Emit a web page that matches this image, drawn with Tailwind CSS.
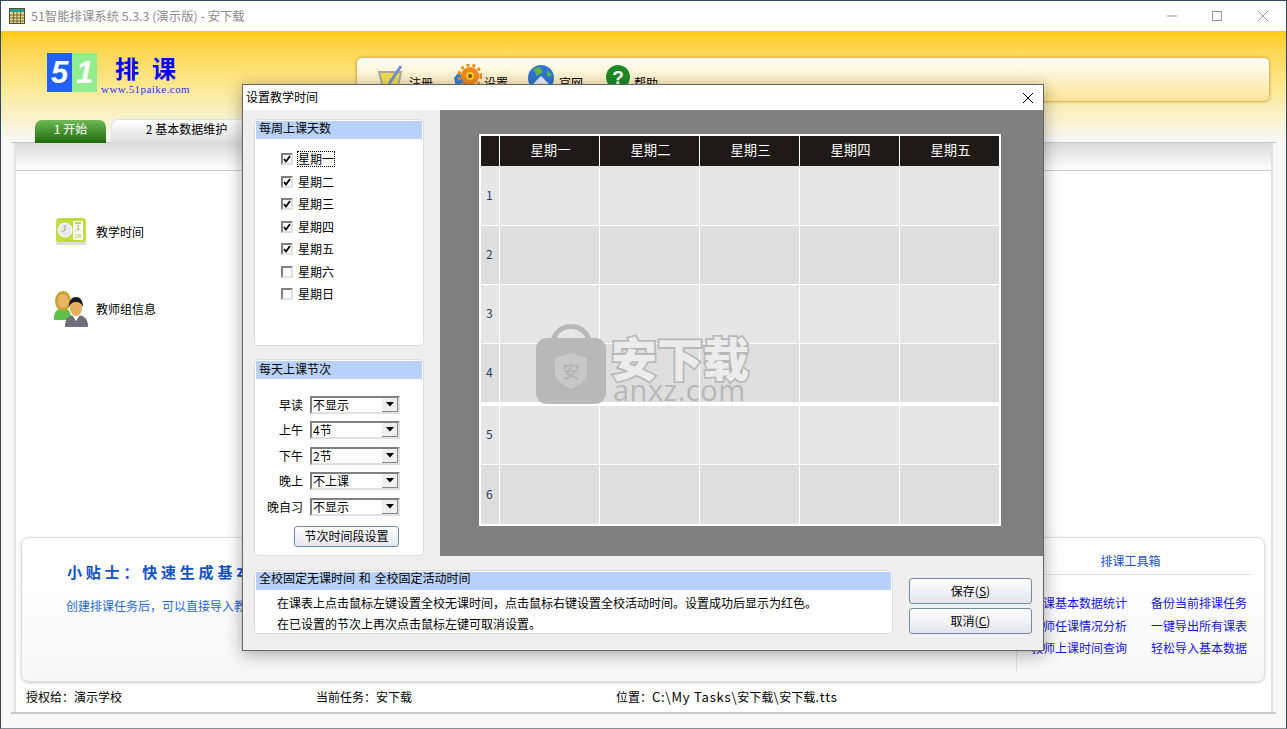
<!DOCTYPE html>
<html lang="zh-CN">
<head>
<meta charset="utf-8">
<title>51智能排课系统</title>
<script src="https://cdn.jsdelivr.net/npm/@tailwindcss/browser@4"></script>
</head>
<body class="m-0 bg-white">
<div class="relative w-[1287px] h-[729px] overflow-hidden flex flex-col border border-[#2c4a63] border-b-[#8a8f94] bg-[#f8f8f8] text-[12px] leading-[16px] text-black font-['Noto_Sans_CJK_SC',sans-serif]">

  <!-- title bar -->
  <div class="h-[30px] shrink-0 bg-white flex items-center pl-[8px]">
    <svg width="16" height="16" viewBox="0 0 16 16" class="mr-[6px]"><rect x="0.5" y="0.5" width="15" height="15" fill="#e8dc8c" stroke="#55502a"/><rect x="1" y="1" width="14" height="3" fill="#1f9c9c"/><path d="M1 7h14M1 10h14M1 13h14M4.500 4v11M8 4v11M11.500 4v11" stroke="#6b6636" stroke-width="1"/></svg>
    <span class="text-[#8c8c8c] text-[12.400px]">51智能排课系统 5.3.3 (演示版) - 安下载</span>
    <div class="ml-auto flex items-center h-full">
      <svg width="46" height="30" viewBox="0 0 46 30"><path d="M21 15h10" stroke="#999" stroke-width="1"/></svg>
      <svg width="46" height="30" viewBox="0 0 46 30"><rect x="20.500" y="10.500" width="9" height="9" fill="none" stroke="#999"/></svg>
      <svg width="46" height="30" viewBox="0 0 46 30" class="mr-[2px]"><path d="M20 10l10 10M30 10l-10 10" stroke="#999" stroke-width="1"/></svg>
    </div>
  </div>

  <!-- header -->
  <div class="h-[111px] shrink-0 bg-gradient-to-b from-[#ffcc0a] via-[#fde98f] to-[#f8f8f8] relative flex">
    <div class="ml-[46px] mt-[22px] w-[150px] flex items-start">
      <div class="w-[25px] h-[39px] bg-[#2060ff] text-white italic font-bold text-[31px] leading-[39px] text-center font-['Liberation_Sans',sans-serif]">5</div>
      <div class="w-[25px] h-[39px] bg-[#90ee90] text-white italic font-bold text-[31px] leading-[39px] text-center font-['Liberation_Sans',sans-serif]">1</div>
      <div class="ml-[4px] flex flex-col">
        <div class="pl-[14px] text-[#0000ff] font-bold text-[24px] leading-[30px] tracking-[13px] font-['Noto_Sans_CJK_SC',serif] whitespace-nowrap">排课</div>
        <div class="text-[#3030ff] text-[11px] leading-[12px] whitespace-nowrap font-['Liberation_Serif',serif] tracking-[0.450px]">www.51paike.com</div>
      </div>
    </div>
    <div class="ml-[159px] mt-[26px] w-[914px] h-[45px] rounded-[6px] border border-[#d9bf63] bg-gradient-to-b from-[#fffefa] to-[#fde495] shadow-[0_0_3px_#d6ae33] flex items-start pl-[20px] pt-[6px]">
      <div class="flex items-start w-[75px]">
        <svg width="28" height="30" viewBox="0 0 28 30"><path d="M2 8h22l-4 20H7z" fill="#f2de4e" stroke="#a9a9a9" stroke-width="2"/><path d="M12 20L24 2" stroke="#7a8fd0" stroke-width="3"/></svg>
        <span class="ml-[4px] mt-[11px]">注册</span>
      </div>
      <div class="flex items-start w-[75px]">
        <svg width="30" height="30" viewBox="0 0 30 30"><path d="M2 14l4-5 3 2 4-4 4 20H5z" fill="#2f7fd8"/><circle cx="18" cy="12" r="9" fill="#f08a1c"/><circle cx="18" cy="12" r="11" fill="none" stroke="#f08a1c" stroke-width="3" stroke-dasharray="3 3"/><circle cx="18" cy="12" r="4" fill="#f7d331"/><circle cx="18" cy="12" r="2" fill="#8a4a10"/></svg>
        <span class="ml-[2px] mt-[11px]">设置</span>
      </div>
      <div class="flex items-start w-[78px]">
        <svg width="28" height="30" viewBox="0 0 28 30"><circle cx="14" cy="14" r="13" fill="#2f75cf"/><path d="M6 5l7-2 3 5-6 4zM20 6l5 5-5 2z" fill="#62b54a"/><path d="M5 21L14 12l9 9v6H5z" fill="#e8eef8"/></svg>
        <span class="ml-[4px] mt-[11px]">官网</span>
      </div>
      <div class="flex items-start">
        <svg width="26" height="30" viewBox="0 0 26 30"><circle cx="13" cy="13" r="12" fill="#1d8a25"/><text x="13" y="20" text-anchor="middle" font-size="19" font-weight="700" fill="#fff" font-family="Liberation Sans">?</text></svg>
        <span class="ml-[3px] mt-[11px]">帮助</span>
      </div>
    </div>
    <!-- tabs -->
    <div class="absolute left-[34px] top-[88px] flex items-end gap-[5px]">
      <div class="w-[71px] h-[23px] rounded-t-[7px] bg-gradient-to-b from-[#6dbb52] to-[#1c6b0b] text-white text-center leading-[17px]">1 开始</div>
      <div class="w-[151px] h-[24px] rounded-t-[7px] border border-b-0 border-[#e2e2e2] bg-gradient-to-b from-white to-[#dedede] text-center leading-[18px]">2 基本数据维护</div>
    </div>
  </div>

  <!-- main panel -->
  <div class="ml-[10px] mr-[10px] h-[572px] shrink-0 border-t border-b-2 border-[#c8c8c8] flex">
    <div class="ml-[3px] mr-[3px] flex-1 border-l-2 border-r-2 border-[#e2e2e2] bg-white flex flex-col">
      <div class="h-[28px] shrink-0 bg-gradient-to-b from-[#dcdcdc] to-white border-b border-[#cccccc]"></div>

      <div class="h-[366px] shrink-0 pl-[39px] pt-[46px] flex flex-col gap-[43px]">
        <div class="flex items-center h-[30px]">
          <svg width="32" height="30" viewBox="0 0 32 30"><rect x="1" y="1" width="30" height="25" rx="4" fill="#bfdd3c"/><rect x="1" y="25" width="30" height="3" fill="#ddd"/><circle cx="10" cy="13" r="7" fill="#e8e8e8" stroke="#fff"/><path d="M10 13V8M10 13l-3 2" stroke="#999"/><rect x="18" y="4" width="10" height="19" fill="#fff"/><path d="M20 6h6" stroke="#a5c52e" stroke-width="1.500"/><path d="M18 14h10" stroke="#ddd"/><text x="23" y="13" text-anchor="middle" font-size="7" fill="#8aa822" font-family="Liberation Sans">1</text><text x="23" y="21" text-anchor="middle" font-size="6" fill="#a5c52e" font-family="Liberation Sans">28</text></svg>
          <span class="ml-[9px]">教学时间</span>
        </div>
        <div class="flex items-center h-[38px] -ml-[2px]">
          <svg width="36" height="38" viewBox="0 0 36 38"><path d="M1 27c0-6 5-9 9-9s8 3 8 9v3H1z" fill="#5cc04a"/><ellipse cx="10" cy="11" rx="8" ry="10" fill="#c8a22f"/><ellipse cx="10" cy="11" rx="5.500" ry="7" fill="#e9b566"/><path d="M12 36c0-9 5-11 11-11s12 2 12 11v1H12z" fill="#6e6e7c"/><path d="M19 25l4 6 4-6z" fill="#fff"/><ellipse cx="23" cy="18" rx="6" ry="8" fill="#e6ad5c"/><path d="M16 17c0-7 3-10 7-10s7 3 7 10c-2-4-4-5-7-5s-5 1-7 5z" fill="#1a1a1a"/></svg>
          <span class="ml-[7px]">教师组信息</span>
        </div>
      </div>

      <!-- tips card -->
      <div class="ml-[5px] mr-[6px] h-[145px] shrink-0 rounded-[8px] border border-[#dedede] shadow-[0_1px_3px_#cccccc] bg-gradient-to-b from-white to-[#f7f7f7] flex">
        <div class="w-[994px] shrink-0 pl-[45px] pt-[24px]">
          <div class="font-bold text-[15px] leading-[20px] tracking-[3.800px] text-[#1050c8] whitespace-nowrap">小贴士：快速生成基本数据</div>
          <div class="mt-[16px] -ml-[1px] text-[#2a6ad0] whitespace-nowrap">创建排课任务后，可以直接导入教师和课程数据</div>
        </div>
        <div class="flex-1 relative">
          <div class="h-[37px] mr-[13px] pr-[6px] border-b border-[#e2e2e2] text-center leading-[46px] text-[#2255cc] whitespace-nowrap">排课工具箱</div>
          <div class="absolute left-0 top-[51px] h-[84px] w-px bg-[#e0e0e0]"></div>
          <div class="pt-[20px] pl-[15px] grid grid-cols-[96px_96px] gap-x-[24px] gap-y-[6.600px] text-[#1414e6] text-right whitespace-nowrap">
            <span>排课基本数据统计</span><span>备份当前排课任务</span>
            <span>教师任课情况分析</span><span>一键导出所有课表</span>
            <span>教师上课时间查询</span><span>轻松导入基本数据</span>
          </div>
        </div>
      </div>

      <!-- status -->
      <div class="pl-[10px] mt-[7px] flex whitespace-nowrap">
        <span class="w-[290px]">授权给：演示学校</span>
        <span class="w-[300px]">当前任务：安下载</span>
        <span>位置：<span class="text-[13px] tracking-[0.800px]">C:\My Tasks\</span>安下载<span class="text-[13px] tracking-[0.800px]">\</span>安下载<span class="text-[13px] tracking-[0.800px]">.tts</span></span>
      </div>
    </div>
  </div>

  <!-- dialog window -->
  <div class="absolute left-[241px] top-[83px] w-[802px] h-[567px] border border-[#666666] bg-[#efefef] shadow-[0_3px_16px_rgba(0,0,0,0.35)] flex flex-col">
    <div class="h-[25px] shrink-0 bg-white flex items-center pl-[3px] justify-between">
      <span class="-mt-[2px]">设置教学时间</span>
      <svg width="12" height="12" viewBox="0 0 12 12" class="mr-[9px]"><path d="M1 1l10 10M11 1L1 11" stroke="#000" stroke-width="1"/></svg>
    </div>
    <div class="flex h-[446px] shrink-0">
      <div class="w-[197px] shrink-0 pl-[11px] pt-[9px] flex flex-col">
        <div class="w-[170px] h-[228px] rounded-[4px] border border-[#dddddd] bg-white p-px">
          <div class="h-[18px] bg-[#b9d2fb] pl-[3px] leading-[13px]">每周上课天数</div>
          <div class="pl-[25px] pt-[12px] flex flex-col gap-[6.500px]">
            <label class="flex items-center h-[16px]"><span class="w-[12px] h-[12px] border-2 border-[#808080] border-r-[#e0e0e0] border-b-[#e0e0e0] bg-white flex items-center justify-center"><svg width="8" height="8" viewBox="0 0 8 8"><path d="M1 4l2 2.500L7 1" fill="none" stroke="#000" stroke-width="1.800"/></svg></span><span class="ml-[5px] outline-1 outline-dotted outline-black px-0 leading-[14px]">星期一</span></label>
            <label class="flex items-center h-[16px]"><span class="w-[12px] h-[12px] border-2 border-[#808080] border-r-[#e0e0e0] border-b-[#e0e0e0] bg-white flex items-center justify-center"><svg width="8" height="8" viewBox="0 0 8 8"><path d="M1 4l2 2.500L7 1" fill="none" stroke="#000" stroke-width="1.800"/></svg></span><span class="ml-[5px]">星期二</span></label>
            <label class="flex items-center h-[16px]"><span class="w-[12px] h-[12px] border-2 border-[#808080] border-r-[#e0e0e0] border-b-[#e0e0e0] bg-white flex items-center justify-center"><svg width="8" height="8" viewBox="0 0 8 8"><path d="M1 4l2 2.500L7 1" fill="none" stroke="#000" stroke-width="1.800"/></svg></span><span class="ml-[5px]">星期三</span></label>
            <label class="flex items-center h-[16px]"><span class="w-[12px] h-[12px] border-2 border-[#808080] border-r-[#e0e0e0] border-b-[#e0e0e0] bg-white flex items-center justify-center"><svg width="8" height="8" viewBox="0 0 8 8"><path d="M1 4l2 2.500L7 1" fill="none" stroke="#000" stroke-width="1.800"/></svg></span><span class="ml-[5px]">星期四</span></label>
            <label class="flex items-center h-[16px]"><span class="w-[12px] h-[12px] border-2 border-[#808080] border-r-[#e0e0e0] border-b-[#e0e0e0] bg-white flex items-center justify-center"><svg width="8" height="8" viewBox="0 0 8 8"><path d="M1 4l2 2.500L7 1" fill="none" stroke="#000" stroke-width="1.800"/></svg></span><span class="ml-[5px]">星期五</span></label>
            <label class="flex items-center h-[16px]"><span class="w-[12px] h-[12px] border-2 border-[#808080] border-r-[#e0e0e0] border-b-[#e0e0e0] bg-white"></span><span class="ml-[5px]">星期六</span></label>
            <label class="flex items-center h-[16px]"><span class="w-[12px] h-[12px] border-2 border-[#808080] border-r-[#e0e0e0] border-b-[#e0e0e0] bg-white"></span><span class="ml-[5px]">星期日</span></label>
          </div>
        </div>
        <div class="mt-[13px] w-[170px] h-[198px] rounded-[4px] border border-[#dddddd] bg-white p-px">
          <div class="h-[18px] bg-[#b9d2fb] pl-[3px] leading-[15px]">每天上课节次</div>
          <div class="pt-[17px] flex flex-col gap-[7.500px]">
            <div class="flex items-center h-[18px]"><span class="w-[47px] text-right">早读</span><span class="ml-[7px] w-[90px] h-[18px] border-2 border-[#808080] border-r-[#e0e0e0] border-b-[#e0e0e0] flex items-center pl-[1px]"><span class="flex-1 leading-[14px]">不显示</span><span class="w-[16px] h-[14px] bg-[#efefef] flex items-center justify-center border-r border-b border-[#888888]"><svg width="8" height="5" viewBox="0 0 8 5"><path d="M0 0h8L4 4.500z" fill="#000"/></svg></span></span></div>
            <div class="flex items-center h-[18px]"><span class="w-[47px] text-right">上午</span><span class="ml-[7px] w-[90px] h-[18px] border-2 border-[#808080] border-r-[#e0e0e0] border-b-[#e0e0e0] flex items-center pl-[1px]"><span class="flex-1 leading-[14px]">4节</span><span class="w-[16px] h-[14px] bg-[#efefef] flex items-center justify-center border-r border-b border-[#888888]"><svg width="8" height="5" viewBox="0 0 8 5"><path d="M0 0h8L4 4.500z" fill="#000"/></svg></span></span></div>
            <div class="flex items-center h-[18px]"><span class="w-[47px] text-right">下午</span><span class="ml-[7px] w-[90px] h-[18px] border-2 border-[#808080] border-r-[#e0e0e0] border-b-[#e0e0e0] flex items-center pl-[1px]"><span class="flex-1 leading-[14px]">2节</span><span class="w-[16px] h-[14px] bg-[#efefef] flex items-center justify-center border-r border-b border-[#888888]"><svg width="8" height="5" viewBox="0 0 8 5"><path d="M0 0h8L4 4.500z" fill="#000"/></svg></span></span></div>
            <div class="flex items-center h-[18px]"><span class="w-[47px] text-right">晚上</span><span class="ml-[7px] w-[90px] h-[18px] border-2 border-[#808080] border-r-[#e0e0e0] border-b-[#e0e0e0] flex items-center pl-[1px]"><span class="flex-1 leading-[14px]">不上课</span><span class="w-[16px] h-[14px] bg-[#efefef] flex items-center justify-center border-r border-b border-[#888888]"><svg width="8" height="5" viewBox="0 0 8 5"><path d="M0 0h8L4 4.500z" fill="#000"/></svg></span></span></div>
            <div class="flex items-center h-[18px]"><span class="w-[47px] text-right">晚自习</span><span class="ml-[7px] w-[90px] h-[18px] border-2 border-[#808080] border-r-[#e0e0e0] border-b-[#e0e0e0] flex items-center pl-[1px]"><span class="flex-1 leading-[14px]">不显示</span><span class="w-[16px] h-[14px] bg-[#efefef] flex items-center justify-center border-r border-b border-[#888888]"><svg width="8" height="5" viewBox="0 0 8 5"><path d="M0 0h8L4 4.500z" fill="#000"/></svg></span></span></div>
          </div>
          <div class="mt-[10px] ml-[38px] w-[105px] h-[21px] rounded-[3px] border border-[#6f8fa8] bg-gradient-to-b from-white to-[#e6e6f0] text-center leading-[17px]">节次时间段设置</div>
        </div>
      </div>

      <!-- grey area with timetable -->
      <div class="flex-1 bg-[#808080] pl-[39px] pt-[24px]">
        <div class="w-[522px] h-[392px] border-2 border-white bg-white">
          <div class="grid grid-cols-[18px_99px_99px_99px_99px_99px] gap-x-px h-[30px] text-white text-[13.300px] text-center leading-[27px]">
            <div class="bg-[#1f1a17]"></div><div class="bg-[#1f1a17] pl-[2px]">星期一</div><div class="bg-[#1f1a17] pl-[2px]">星期二</div><div class="bg-[#1f1a17] pl-[2px]">星期三</div><div class="bg-[#1f1a17] pl-[2px]">星期四</div><div class="bg-[#1f1a17] pl-[2px]">星期五</div>
          </div>
          <div class="grid grid-cols-[18px_99px_99px_99px_99px_99px] gap-x-px h-[59px] bg-white mb-px">
            <div class="bg-[#e6e6e6] pl-[5px] leading-[58px] text-[#1a3f6a]">1</div><div class="bg-[#e6e6e6]"></div><div class="bg-[#e6e6e6]"></div><div class="bg-[#e6e6e6]"></div><div class="bg-[#e6e6e6]"></div><div class="bg-[#e6e6e6]"></div>
          </div>
          <div class="grid grid-cols-[18px_99px_99px_99px_99px_99px] gap-x-px h-[58px] mb-px">
            <div class="bg-[#dedede] pl-[5px] leading-[56px] text-[#1a3f6a]">2</div><div class="bg-[#dedede]"></div><div class="bg-[#dedede]"></div><div class="bg-[#dedede]"></div><div class="bg-[#dedede]"></div><div class="bg-[#dedede]"></div>
          </div>
          <div class="grid grid-cols-[18px_99px_99px_99px_99px_99px] gap-x-px h-[58px] mb-px">
            <div class="bg-[#e6e6e6] pl-[5px] leading-[56px] text-[#1a3f6a]">3</div><div class="bg-[#e6e6e6]"></div><div class="bg-[#e6e6e6]"></div><div class="bg-[#e6e6e6]"></div><div class="bg-[#e6e6e6]"></div><div class="bg-[#e6e6e6]"></div>
          </div>
          <div class="grid grid-cols-[18px_99px_99px_99px_99px_99px] gap-x-px h-[58px] mb-[4px]">
            <div class="bg-[#dedede] pl-[5px] leading-[56px] text-[#1a3f6a]">4</div><div class="bg-[#dedede]"></div><div class="bg-[#dedede]"></div><div class="bg-[#dedede]"></div><div class="bg-[#dedede]"></div><div class="bg-[#dedede]"></div>
          </div>
          <div class="grid grid-cols-[18px_99px_99px_99px_99px_99px] gap-x-px h-[58px] mb-px">
            <div class="bg-[#e6e6e6] pl-[5px] leading-[56px] text-[#1a3f6a]">5</div><div class="bg-[#e6e6e6]"></div><div class="bg-[#e6e6e6]"></div><div class="bg-[#e6e6e6]"></div><div class="bg-[#e6e6e6]"></div><div class="bg-[#e6e6e6]"></div>
          </div>
          <div class="grid grid-cols-[18px_99px_99px_99px_99px_99px] gap-x-px h-[59px]">
            <div class="bg-[#dedede] pl-[5px] leading-[58px] text-[#1a3f6a]">6</div><div class="bg-[#dedede]"></div><div class="bg-[#dedede]"></div><div class="bg-[#dedede]"></div><div class="bg-[#dedede]"></div><div class="bg-[#dedede]"></div>
          </div>
        </div>
      </div>
    </div>

    <!-- bottom -->
    <div class="flex pl-[11px] pt-[14px]">
      <div class="w-[639px] h-[64px] rounded-[4px] border border-[#dddddd] bg-white p-px">
        <div class="h-[18px] bg-[#b9d2fb] pl-[3px] leading-[11px] [word-spacing:1px]">全校固定无课时间 和 全校固定活动时间</div>
        <div class="pl-[21px] pt-[3px] leading-[20.500px]">
          <div>在课表上点击鼠标左键设置全校无课时间，点击鼠标右键设置全校活动时间。设置成功后显示为红色。</div>
          <div>在已设置的节次上再次点击鼠标左键可取消设置。</div>
        </div>
      </div>
      <div class="ml-[16px] mt-[8px] flex flex-col gap-[4px]">
        <div class="w-[123px] h-[26px] rounded-[3px] border border-[#6f8fa8] bg-gradient-to-b from-white to-[#e4e4ee] text-center leading-[24px]">保存(<span class="underline">S</span>)</div>
        <div class="w-[123px] h-[26px] rounded-[3px] border border-[#6f8fa8] bg-gradient-to-b from-white to-[#e4e4ee] text-center leading-[24px]">取消(<span class="underline">C</span>)</div>
      </div>
    </div>
  </div>

  <!-- watermark -->
  <div class="absolute left-[534px] top-[322px] flex items-start pointer-events-none">
    <svg width="72" height="82" viewBox="0 0 72 82"><path d="M18 18C22 -1.500 50 -1.500 54 18" fill="none" stroke="#b8b8b8" stroke-width="5"/><rect x="1" y="15" width="70" height="66" rx="11" fill="#b8b8b8"/><path d="M36 30l16 5v14c0 9-8 13-16 17-8-4-16-8-16-17V35z" fill="#c8c8c8"/><text x="36" y="55" text-anchor="middle" font-size="17" font-weight="500" fill="#b2b2b2" font-family="Noto Sans CJK SC">安</text></svg>
    <div class="ml-[4px] mt-[8px] flex flex-col">
      <div class="text-[46px] leading-[50px] font-black text-[#ececec] [-webkit-text-stroke:3.500px_#b8b8b8] [paint-order:stroke_fill] whitespace-nowrap">安下载</div>
      <div class="-mt-[5px] ml-[2px] text-[29px] leading-[28px] text-[#b8b8b8] font-['Open_Sans',sans-serif] tracking-[0.500px] whitespace-nowrap">anxz.com</div>
    </div>
  </div>
</div>
</body>
</html>
